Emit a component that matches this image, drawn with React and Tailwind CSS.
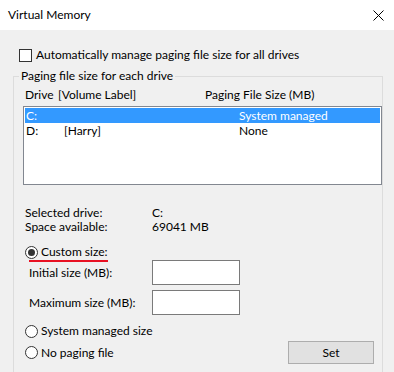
import React from 'react';

function Radio({ checked }) {
    return (
        <span className="w-[13px] h-[13px] rounded-full border border-[#333333] bg-white flex items-center justify-center shrink-0">
            {checked && <span className="w-[7px] h-[7px] rounded-full bg-[#333333]"></span>}
        </span>
    );
}

function App() {
    return (
        <div className="w-[394px] h-[372px] overflow-hidden bg-[#f0f0f0] text-[12px] leading-[16px] text-black" style={{ fontFamily: 'Lato, "Noto Sans", sans-serif' }}>
            {/* Title bar */}
            <div className="h-[30px] bg-white flex items-center justify-between pl-[8px] pr-[10px]">
                <span>Virtual Memory</span>
                <svg width="11" height="11" viewBox="0 0 11 11">
                    <path d="M0.5 0.5 L10.5 10.5 M10.5 0.5 L0.5 10.5" stroke="#000" strokeWidth="1" />
                </svg>
            </div>

            {/* Auto manage checkbox */}
            <div className="mt-[17px] ml-[19px] flex items-center gap-[4px] h-[16px]">
                <span className="w-[13px] h-[13px] border border-[#333333] bg-white shrink-0"></span>
                <span>Automatically manage paging file size for all drives</span>
            </div>

            {/* Group box */}
            <fieldset className="mt-[5px] ml-[13px] w-[368px] h-[320px] border border-[#dcdcdc]">
                <legend className="ml-[5px] px-[2px] leading-[16px]">Paging file size for each drive</legend>

                <div className="mt-[3px] pl-[11px] flex h-[16px] items-center">
                    <span className="w-[33px]">Drive</span>
                    <span className="w-[147px]">[Volume Label]</span>
                    <span>Paging File Size (MB)</span>
                </div>

                {/* Drive list */}
                <div className="mt-[3px] ml-[9px] w-[359px] h-[79px] border border-[#828790] bg-white p-[1px]">
                    <div className="h-[15px] bg-[#3399ff] text-white flex items-center pl-[1px]">
                        <span className="w-[213px]">C:</span>
                        <span>System managed</span>
                    </div>
                    <div className="h-[15px] flex items-center pl-[1px]">
                        <span className="w-[38px]">D:</span>
                        <span className="w-[175px]">[Harry]</span>
                        <span>None</span>
                    </div>
                </div>

                {/* Drive info */}
                <div className="mt-[21px] pl-[11px] leading-[14px]">
                    <div className="flex">
                        <span className="w-[127px]">Selected drive:</span>
                        <span>C:</span>
                    </div>
                    <div className="flex">
                        <span className="w-[127px]">Space available:</span>
                        <span>69041 MB</span>
                    </div>
                </div>

                {/* Custom size */}
                <div className="mt-[10px] pl-[11px] flex items-center gap-[3px] h-[16px] relative">
                    <Radio checked />
                    <span>Custom size:</span>
                    <span className="absolute left-[15px] top-[16px] w-[79px] h-[2px] bg-[#e81123]"></span>
                </div>

                <div className="pl-[15px] flex items-center h-[25px]">
                    <span className="w-[123px]">Initial size (MB):</span>
                    <span className="w-[88px] h-[25px] border border-[#7a7a7a] bg-white"></span>
                </div>
                <div className="mt-[5px] pl-[15px] flex items-center h-[25px]">
                    <span className="w-[123px]">Maximum size (MB):</span>
                    <span className="w-[88px] h-[25px] border border-[#7a7a7a] bg-white"></span>
                </div>

                <div className="mt-[8px] pl-[11px] flex items-center gap-[3px] h-[16px]">
                    <Radio />
                    <span>System managed size</span>
                </div>
                <div className="mt-[2px] pl-[11px] pr-[8px] flex items-center justify-between h-[23px]">
                    <div className="flex items-center gap-[3px]">
                        <Radio />
                        <span>No paging file</span>
                    </div>
                    <button className="w-[86px] h-[23px] bg-[#e1e1e1] border border-[#adadad] text-[12px]">Set</button>
                </div>
            </fieldset>
        </div>
    );
}

export default App;
